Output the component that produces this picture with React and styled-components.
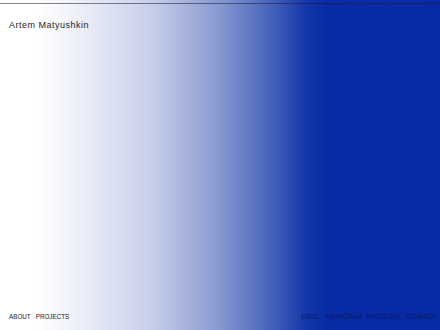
import styled, { createGlobalStyle } from 'styled-components';

const Global = createGlobalStyle`
  html, body { margin: 0; padding: 0; height: 100%; }
  #root { height: 100%; }
  body { font-family: "Liberation Sans", Arial, sans-serif; }
`;

const Page = styled.div`
  height: 330px;
  display: flex;
  flex-direction: column;
  justify-content: space-between;
  background: linear-gradient(
    to right,
    #ffffff 8%,
    #f1f3f9 16%,
    #c8d0ea 34%,
    #8798d1 50%,
    #3d5bb8 63%,
    #1035a9 70%,
    #072ca6 74%,
    #062ba5 100%
  );
  box-sizing: border-box;
  position: relative;
`;

const TopRule = styled.div`
  position: absolute;
  top: 3px;
  left: 0;
  right: 0;
  height: 1px;
  background: rgba(30, 30, 50, 0.55);
`;

const Header = styled.header`
  padding: 20px 9px 0;
`;

const Name = styled.h1`
  margin: 0;
  font-size: 9px;
  line-height: 10px;
  font-weight: 400;
  letter-spacing: 0.5px;
  color: #222;
`;

const Footer = styled.footer`
  display: flex;
  justify-content: space-between;
  align-items: flex-end;
  padding: 0 3px 10px 9px;
`;

const Nav = styled.nav`
  display: flex;
  gap: 5px;
`;

const Link = styled.a`
  font-size: 6.3px;
  line-height: 7px;
  color: ${p => (p.$dark ? '#0b1a5c' : '#222')};
  text-decoration: none;
  text-transform: uppercase;
`;

export default function App() {
  return (
    <>
      <Global />
      <Page>
        <TopRule />
        <Header>
          <Name>Artem Matyushkin</Name>
        </Header>
        <Footer>
          <Nav>
            <Link>About</Link>
            <Link>Projects</Link>
          </Nav>
          <Nav>
            <Link $dark>Email</Link>
            <Link $dark>Instagram</Link>
            <Link $dark>Facebook</Link>
            <Link $dark>Behance</Link>
          </Nav>
        </Footer>
      </Page>
    </>
  );
}
